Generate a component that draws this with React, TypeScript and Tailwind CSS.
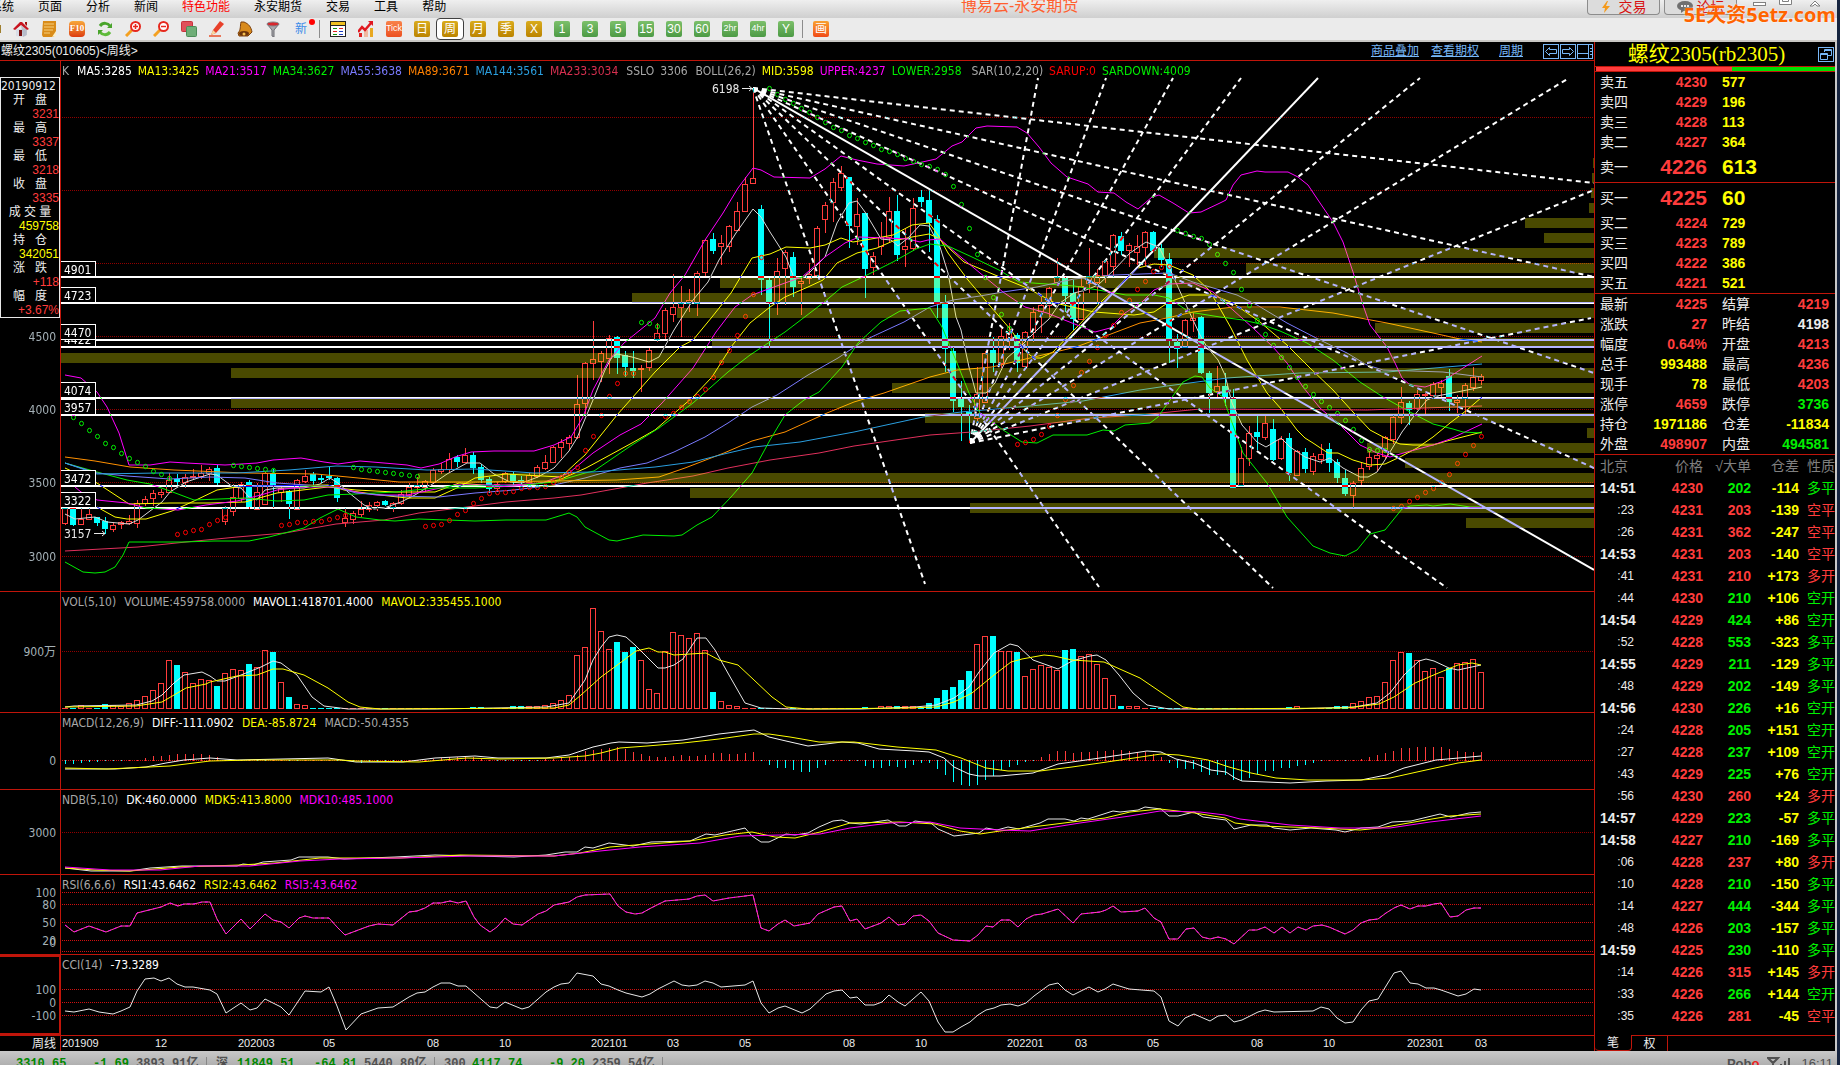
import type { ReactNode } from 'react';

const RED = '#c0150a';
const UP = '#ff3c3c';
const DOWN = '#00ffff';
const YELLOW = '#ffff00';
const MAGENTA = '#ff00ff';
const GREEN = '#00f000';

const STEP = 8;
const FIRST_X = 65;
const barX = (i: number) => FIRST_X + i * STEP;

// high, body top, body bottom, low ("c" = closed lower)
const candles = `508,508,523,525 508,508,525,526c 508,519,524,525 508,514,519,520 517,517,523,526c 517,521,529,534c
522,525,529,532 521,522,524,529 515,521,523,525 500,503,523,528 496,499,503,506 490,493,498,506 489,492,494,498
473,480,492,493 474,479,482,485c 474,477,482,488 469,476,477,480 465,473,476,479 467,469,473,481 465,468,483,485c
506,508,521,525 484,497,511,516 482,484,498,502 480,482,507,509c 483,492,509,509 472,473,504,505 469,473,485,508c
487,488,492,502 490,491,504,519c 479,480,509,510 470,476,481,483 472,474,481,485c 475,478,480,483c 467,476,478,480c
477,478,498,502c 508,518,522,527 511,513,519,524 501,509,514,517 502,505,509,512 501,502,505,511 500,501,505,506c
502,503,507,512 490,494,503,505 483,487,495,498 477,485,487,492 480,481,487,492 468,470,482,484 463,469,471,474
453,459,469,472 455,457,462,467c 448,455,462,463 452,455,468,474c 464,467,480,483c 477,479,489,493c 482,484,488,492
472,473,481,483 472,474,482,485c 476,480,482,487c 473,475,482,483 465,467,476,478 455,462,468,470 446,447,462,463
439,442,447,458 435,437,443,450 375,404,437,439 362,363,403,415 321,359,363,380 351,353,361,382 335,338,358,374
336,337,358,374c 351,355,367,377c 351,368,371,378c 365,368,369,392 348,350,367,371 323,333,339,342 308,310,333,339
274,307,314,322 286,303,307,337 289,300,303,312 271,273,303,316 239,240,272,276 233,239,251,254c 235,243,246,265
225,226,246,252 202,211,230,231 177,184,211,212 88,178,183,184 205,209,280,295c 278,280,303,348c 258,271,302,315
250,252,268,305 252,257,287,297c 278,281,283,315 263,274,278,284 226,228,275,277 202,205,219,233 178,182,202,222
166,173,187,191 177,177,226,248c 198,214,226,245 213,213,269,298c 252,256,267,275 222,237,246,255 197,211,237,243
195,211,255,261c 229,246,249,267 198,208,248,251 190,197,202,207c 190,200,223,252c 215,219,304,318c 295,303,349,372c
347,351,401,412c 381,399,407,441c 405,412,414,443c 367,394,418,423 351,353,402,403 337,350,363,372c 328,336,363,368
323,332,338,350 333,335,363,372c 331,332,366,368 307,312,332,342 295,305,311,333 287,288,305,317 258,277,282,284
277,278,296,312c 280,293,319,330c 278,286,319,320 248,276,283,293 269,275,282,304 260,261,275,283 234,235,266,277
232,236,251,255c 243,245,250,267 235,246,252,265 231,232,247,266 231,232,251,252c 244,248,260,267c 253,259,341,363c
334,342,349,368c 319,320,347,348 313,318,320,332 316,317,373,374c 371,373,393,413c 366,386,391,397 373,386,397,406c
389,398,488,488c 447,458,485,486 426,433,458,466 416,432,437,450c 416,423,437,440 419,429,460,461c 436,439,458,460
433,438,473,481c 450,451,475,476 448,452,469,473c 453,456,471,475 444,454,459,464 443,449,463,472c 459,462,478,483c
470,478,494,496c 481,483,495,508 462,468,480,485 451,457,466,470 453,455,458,471 436,437,456,459 415,417,439,444
387,402,417,424 401,403,410,425c 390,394,408,410 391,394,395,414 382,384,395,399 380,383,387,397 369,376,402,411c
395,400,402,413 383,385,398,414 367,377,387,391 374,376,380,385`
  .split(/\s+/)
  .map((s) => {
    const [high, top, bottom, low] = s.replace('c', '').split(',').map(Number);
    return { high, top, bottom, low, down: s.endsWith('c') };
  });

// bar heights of the volume pane
const volumes = [
  1, 1, 3, 1, 1, 5, 3, 2, 5, 8, 12, 18, 25, 48, 44, 36, 25, 29, 28, 23, 35, 39, 38, 45, 41, 58, 57, 26, 12, 4, 3, 1, 1, 1,
  1, 1, 1, 1, 1, 1, 1, 1, 1, 1, 1, 1, 1, 1, 1, 1, 1, 2, 2, 1, 1, 1, 3, 3, 2, 2, 3, 5, 8, 13, 53, 61, 100, 77, 59, 67, 57,
  62, 48, 19, 15, 57, 76, 73, 70, 75, 58, 17, 7, 3, 2, 1, 1, 1, 1, 1, 1, 1, 1, 1, 1, 1, 1, 1, 1, 1, 2, 1, 2, 2, 3, 2, 2, 1,
  6, 11, 19, 22, 29, 38, 64, 72, 73, 57, 57, 57, 32, 39, 43, 41, 38, 59, 60, 52, 54, 44, 30, 13, 3, 2, 2, 1, 1, 1, 1, 1, 1,
  1, 1, 1, 1, 1, 1, 1, 1, 1, 1, 1, 1, 2, 2, 1, 1, 1, 1, 3, 3, 5, 7, 11, 12, 26, 48, 56, 56, 48, 37, 40, 31, 41, 45, 46,
  49, 36,
];

const macdBars = [
  -4, -4, -3, -2, -2, -1, -1, -1, 1, 1, 3, 5, 5, 6, 7, 7, 7, 7, 6, 4, 1, 1, 1, 1, -1, -1, 1, 1, -1, -1, 1, 1, 1, 1, -1, -1,
  -2, -3, -2, -2, -1, -1, -1, 1, 1, 1, 2, 3, 4, 4, 4, 4, 2, 1, -1, -1, -1, -1, -1, -1, 2, 2, 3, 4, 6, 10, 11, 12, 13, 14,
  12, 9, 7, 5, 4, 4, 5, 6, 5, 5, 6, 8, 8, 7, 7, 8, 9, -1, -5, -8, -8, -10, -12, -12, -8, -5, -1, 1, -1, -1, -6, -8, -8, -6,
  -7, -8, -5, -3, -3, -9, -15, -22, -25, -26, -25, -20, -16, -10, -7, -5, -2, -1, 4, 7, 10, 10, 8, 9, 9, 10, 10, 11, 11,
  10, 9, 9, 7, 4, -3, -8, -9, -9, -12, -15, -15, -15, -20, -21, -18, -14, -11, -11, -8, -8, -6, -5, -3, -1, 1, 1, -1, 1, 2,
  4, 6, 8, 10, 13, 13, 14, 14, 14, 14, 12, 10, 9, 9, 9,
];

// [left edge, top] of the price distribution bars, all of them run to the right edge
const distribution = [
  [1593, 158], [1592, 173], [1591, 188], [1589, 203], [1525, 218], [1544, 233], [1154, 248], [1246, 263], [720, 278],
  [632, 293], [677, 308], [1375, 323], [712, 338], [61, 353], [231, 368], [892, 383], [231, 398], [925, 413],
  [1587, 428], [1367, 443], [1405, 458], [418, 473], [690, 488], [970, 503], [1466, 518],
];

const priceLines = [
  { color: '#d8d8d8', points: '65,514 75,519 95,517 107,522 129,524 138,520 162,502 170,492 186,482 210,474 217,475 233,487 241,488 249,497 257,500 265,490 277,488 304,488 320,484 330,478 338,483 348,492 364,505 374,509 384,508 401,502 415,495 431,485 447,474 467,463 480,463 494,474 510,482 522,483 538,477 554,468 569,451 577,438 593,400 605,370 612,357 617,354 632,357 649,362 659,357 674,330 693,300 708,282 719,260 736,233 753,209 761,217 770,232 786,257 794,278 802,278 810,272 825,257 837,223 849,203 857,201 865,212 881,239 891,240 898,246 908,238 920,225 929,226 940,247 948,273 956,317 961,330 969,367 976,393 986,393 995,383 1007,358 1022,345 1037,330 1049,319 1060,303 1074,293 1086,290 1098,285 1114,270 1130,253 1146,242 1159,247 1169,267 1187,307 1200,335 1207,347 1218,360 1225,375 1232,403 1242,425 1257,442 1266,447 1281,438 1290,447 1305,457 1320,462 1330,458 1343,468 1360,477 1368,477 1377,472 1385,460 1393,447 1402,432 1417,412 1427,400 1437,396 1457,392 1482,387' },
  { color: '#ffff00', points: '97,507 115,517 127,519 146,519 172,511 194,501 217,490 237,487 257,486 328,485 344,490 380,495 407,498 435,498 459,487 475,478 506,474 561,477 576,463 585,455 617,415 655,372 680,347 693,340 712,317 731,293 752,258 770,254 786,247 810,248 825,245 841,238 853,242 877,238 893,235 912,225 929,223 938,235 948,253 968,280 991,307 1011,330 1026,352 1034,358 1041,358 1053,352 1076,328 1103,300 1138,268 1154,264 1169,265 1193,275 1209,290 1218,305 1231,328 1247,360 1267,393 1282,410 1297,430 1305,438 1313,443 1328,453 1338,453 1353,460 1370,465 1385,464 1400,457 1417,448 1433,437 1450,423 1467,410 1482,397' },
  { color: '#ffff00', points: '65,468 97,483 129,504 170,503 210,503 245,502 277,493 328,487 356,490 395,492 435,492 459,483 494,486 534,484 559,480 586,468 632,443 655,430 693,397 712,377 731,347 750,323 770,307 785,297 808,287 823,280 837,263 857,253 877,248 893,241 912,237 929,234 938,238 964,262 995,275 1027,288 1055,303 1094,312 1134,315 1154,312 1169,302 1189,295 1213,295 1233,303 1260,322 1287,345 1310,368 1333,390 1353,412 1370,430 1385,438 1400,444 1413,445 1433,445 1447,441 1482,432' },
  { color: '#ff00ff', points: '75,487 81,492 97,500 127,503 146,508 178,510 206,505 237,501 261,495 277,490 301,487 336,487 356,492 376,495 407,495 431,490 455,485 514,485 542,483 569,473 593,453 620,435 641,424 662,403 693,368 716,332 735,307 752,295 785,283 802,277 825,257 845,243 859,237 885,238 908,239 920,242 928,240 940,239 956,253 980,273 1003,292 1025,307 1047,313 1072,323 1095,332 1110,328 1125,313 1142,302 1154,290 1169,284 1193,283 1213,292 1233,310 1253,328 1273,347 1287,363 1303,387 1320,408 1340,425 1360,445 1377,453 1390,457 1407,452 1433,445 1450,439 1482,424' },
  { color: '#00f000', points: '65,463 97,472 127,480 150,484 170,491 194,500 245,498 277,501 304,500 328,495 356,494 395,492 435,488 475,488 514,486 554,482 585,473 594,471 632,445 659,428 693,403 728,372 750,355 785,332 823,303 842,287 861,278 893,262 916,249 930,244 948,246 972,257 999,270 1019,282 1047,284 1074,286 1098,290 1126,295 1154,295 1169,298 1189,312 1220,317 1243,320 1260,324 1280,331 1307,343 1333,360 1360,382 1383,397 1410,412 1433,424 1453,429 1463,432 1482,433' },
  { color: '#7a7aff', points: '65,463 97,473 127,476 170,479 210,477 245,478 277,483 336,487 356,493 395,496 439,497 475,493 514,490 554,485 585,478 620,468 647,463 674,452 705,437 728,423 752,407 777,395 808,375 838,358 865,340 904,322 930,307 953,300 980,296 1003,292 1037,287 1074,279 1114,275 1169,273 1193,282 1237,295 1257,305 1287,323 1320,340 1347,353 1367,365 1383,370 1443,372 1482,377' },
  { color: '#ff9000', points: '65,457 95,461 130,467 174,470 245,473 316,474 348,477 399,482 475,482 554,481 617,480 659,477 685,468 724,453 752,441 785,432 827,413 854,402 884,393 930,377 957,370 992,367 1030,358 1076,347 1103,337 1140,323 1167,318 1193,312 1233,307 1280,307 1333,313 1387,323 1433,333 1460,339 1482,342' },
  { color: '#2a9fe0', points: '65,463 97,474 158,473 237,473 289,470 336,466 376,467 427,470 475,469 534,473 594,472 655,467 693,462 724,454 754,447 800,442 854,432 923,417 961,412 1030,406 1083,401 1140,390 1167,386 1227,378 1300,373 1387,372 1482,364' },
  { color: '#e0305c', points: '65,551 138,547 186,542 237,537 285,533 336,524 384,520 419,513 467,507 506,502 554,498 581,495 620,488 647,483 693,476 728,468 770,460 819,453 854,446 930,435 972,432 1030,426 1091,418 1140,415 1200,409 1367,410 1482,406' },
  { color: '#ff00ff', points: '65,375 81,378 97,392 107,407 119,433 129,465 150,465 170,462 186,463 225,465 257,463 273,460 301,458 324,462 338,464 360,461 384,463 407,465 421,468 439,464 455,457 471,452 494,451 534,451 554,445 571,437 583,417 593,390 609,360 624,343 655,318 670,293 685,275 705,240 723,213 738,188 753,168 761,170 774,177 810,178 825,169 841,156 857,160 877,164 904,166 936,159 952,146 962,142 976,128 987,126 1017,127 1027,133 1039,147 1051,163 1067,177 1088,184 1098,192 1114,193 1126,202 1138,209 1152,197 1159,195 1173,203 1189,213 1201,212 1220,203 1226,200 1233,185 1241,175 1257,171 1265,172 1288,172 1298,177 1308,185 1318,200 1333,222 1343,242 1353,272 1363,305 1370,325 1387,347 1395,363 1402,378 1410,385 1425,387 1443,381 1460,370 1482,356' },
  { color: '#00f000', points: '65,562 83,572 95,573 105,572 115,567 123,555 129,542 182,542 214,541 249,541 269,537 304,528 320,518 338,509 356,517 380,520 395,521 419,519 475,521 506,520 546,520 569,513 577,517 585,527 609,540 617,541 643,535 674,536 682,535 697,525 712,517 731,497 752,473 770,440 785,415 804,400 819,392 842,367 858,343 881,322 900,311 930,308 942,327 957,363 969,393 980,413 1003,430 1022,442 1037,443 1053,435 1087,435 1103,430 1114,431 1125,425 1150,423 1158,417 1170,400 1183,382 1195,376 1202,377 1210,388 1223,397 1230,417 1243,453 1267,483 1287,517 1313,546 1330,553 1345,556 1357,550 1370,534 1385,530 1402,509 1410,506 1427,505 1433,506 1450,504 1470,507 1482,507' },
];

// parabolic stop-and-reverse dots: starting bar, colour, heights
const sar = [
  { from: 1, color: GREEN, ys: [417, 423, 430, 436, 443, 447, 453, 458, 462, 466, 471, 474, 478] },
  { from: 14, color: 'red', ys: [534, 532, 530, 529, 524, 520, 517] },
  { from: 21, color: GREEN, ys: [465, 466, 467, 468, 469, 470] },
  { from: 27, color: 'red', ys: [525, 524, 522, 522, 521, 521, 519, 517, 515] },
  { from: 36, color: GREEN, ys: [467, 469, 470, 471, 472, 473, 474, 475, 476] },
  { from: 45, color: 'red', ys: [526, 525, 524, 520, 514, 510, 503, 498, 493, 492, 492, 491, 488, 487, 487, 486, 482, 477, 472, 467, 450, 436, 415, 396, 383, 373, 373] },
  { from: 72, color: GREEN, ys: [322, 323, 326] },
  { from: 75, color: 'red', ys: [416, 413, 407, 401, 396, 389, 377, 362, 350, 335, 316, 294, 257] },
  { from: 88, color: GREEN, ys: [88, 94, 99, 103, 108, 112, 117, 122, 127, 130, 135, 138, 142, 145, 149, 151, 154, 158, 161, 164, 166, 169, 174, 186, 204, 228, 254, 277, 297, 314, 328] },
  { from: 119, color: 'red', ys: [444, 442, 439, 434, 426, 415, 399, 385, 372, 361, 347, 335, 325, 312, 300, 289, 281, 271, 267, 266] },
  { from: 139, color: GREEN, ys: [230, 233, 236, 238, 244, 254, 263, 272, 289, 305, 320, 334, 345, 357, 367, 377, 386, 394, 401, 407, 413, 420, 429, 440, 449, 450, 450] },
  { from: 166, color: 'red', ys: [508, 506, 501, 497, 492, 488, 482, 474, 463, 454, 445, 436] },
];

const levels = [
  { value: 4901, y: 277 }, { value: 4723, y: 303 }, { value: 4422, y: 347 }, { value: 4470, y: 340 },
  { value: 4074, y: 398 }, { value: 3957, y: 415 }, { value: 3472, y: 486 }, { value: 3322, y: 508 },
];

const fanDown = [[925, 584], [1099, 587], [1273, 588], [1447, 588], [1594, 468], [1594, 373], [1594, 277], [1594, 183]];
const fanUp = [[1038, 78], [1106, 78], [1173, 78], [1241, 78], [1420, 78], [1569, 78], [1594, 190], [1591, 318]];

const mavol1 = '65,707 74,706 136,705 152,701 162,695 174,683 184,675 202,672 210,676 217,681 225,681 241,675 261,667 273,661 281,663 297,675 312,697 324,706 348,709 435,709 494,708 546,707 569,703 585,680 593,660 601,647 609,637 617,635 626,637 635,645 647,657 658,668 665,668 674,665 683,659 697,638 706,638 715,650 729,675 745,703 761,708 790,709 861,709 915,707 936,705 954,698 969,687 979,672 994,653 1010,644 1018,646 1033,660 1047,665 1058,669 1072,661 1090,656 1097,655 1106,660 1119,675 1133,693 1147,705 1169,709 1290,709 1354,707 1377,703 1390,693 1404,675 1419,661 1426,659 1434,661 1449,668 1458,670 1481,665';
const mavol2 = '65,707 136,706 162,702 186,688 206,684 210,682 237,676 257,675 273,669 283,669 304,675 328,688 348,702 360,707 380,709 554,708 569,705 581,695 601,677 620,663 636,651 649,648 658,652 665,652 674,655 706,653 719,660 738,665 754,680 772,697 786,707 808,709 908,708 936,707 954,702 972,693 994,675 1011,662 1022,659 1044,655 1054,656 1072,660 1104,662 1140,678 1165,695 1183,707 1197,709 1347,708 1379,704 1394,697 1415,683 1436,674 1458,665 1472,663 1481,665';
const diff = '65,769 115,769 146,767 166,763 184,760 210,758 237,760 328,758 356,762 403,762 435,758 475,756 498,758 546,758 569,755 593,747 611,743 619,742 647,743 683,740 719,734 754,730 769,737 786,741 808,746 826,744 842,742 858,743 879,749 915,751 929,752 944,758 954,767 969,774 979,776 1000,776 1033,773 1058,764 1100,758 1147,751 1161,752 1176,759 1194,763 1211,770 1226,772 1235,778 1242,781 1290,783 1326,781 1361,780 1386,775 1404,768 1436,760 1481,756';
const dea = '65,768 107,769 170,766 210,761 253,760 340,760 356,761 419,762 467,758 500,759 554,758 585,756 601,753 620,748 647,746 683,743 719,739 754,734 769,734 790,737 819,742 854,742 897,747 936,750 961,758 986,768 1008,771 1040,771 1072,767 1100,763 1161,754 1179,755 1208,760 1229,767 1251,773 1276,778 1308,780 1361,780 1390,778 1426,770 1458,763 1481,760';
const dk = '65,868 91,871 130,871 150,868 182,866 237,866 243,864 253,865 263,862 291,860 299,857 328,857 344,859 395,857 435,855 475,856 514,857 546,855 565,852 577,852 585,847 593,848 609,843 633,846 651,842 690,841 706,834 715,835 745,828 752,836 761,842 769,842 786,834 795,835 808,833 819,827 833,821 842,820 850,823 861,824 888,820 899,826 906,826 915,821 931,823 938,829 954,836 979,833 986,828 997,830 1008,827 1019,829 1040,823 1048,819 1065,819 1074,821 1081,818 1088,819 1113,811 1120,812 1138,810 1145,807 1161,809 1169,816 1178,816 1194,812 1203,817 1226,820 1234,829 1251,825 1267,825 1274,828 1290,830 1311,828 1336,830 1345,832 1361,828 1378,827 1392,822 1411,821 1440,814 1451,817 1469,813 1481,812';
const mdk5 = '65,868 95,870 130,871 180,867 240,865 275,863 320,858 400,858 460,855 554,856 580,853 610,847 635,845 690,841 725,835 752,832 775,837 795,838 820,832 850,823 900,822 935,824 960,831 980,834 1000,831 1040,826 1080,821 1105,818 1130,812 1160,809 1195,813 1225,818 1235,823 1260,826 1320,828 1360,830 1380,828 1420,821 1450,816 1481,814';
const mdk10 = '65,867 110,870 160,870 200,866 250,866 300,861 340,859 400,858 470,856 554,856 600,851 640,847 700,843 740,836 820,834 850,828 890,823 930,822 960,828 1000,830 1030,831 1080,823 1130,816 1160,811 1200,812 1225,815 1240,819 1290,825 1340,828 1390,828 1430,822 1481,816';
const rsi = '65,925 74,932 89,926 106,932 121,926 130,926 137,913 161,907 170,903 178,906 184,904 194,904 202,902 210,902 217,919 226,934 241,919 250,929 265,914 273,920 281,922 289,928 299,918 305,916 313,918 329,918 337,927 345,935 369,926 378,924 393,925 409,912 417,911 425,908 433,903 441,903 450,901 458,903 466,901 474,917 480,925 490,932 497,927 505,918 513,924 522,925 538,914 546,911 554,905 569,902 577,897 585,895 610,894 618,906 626,912 635,914 642,913 651,908 665,901 689,899 697,896 705,895 713,901 729,898 753,895 761,928 769,931 778,924 785,920 794,926 810,923 818,914 834,907 842,906 850,921 857,919 865,929 881,923 889,917 898,925 905,924 913,916 921,915 929,921 938,933 953,940 970,941 978,935 986,926 993,927 1001,920 1010,920 1018,927 1026,919 1034,915 1042,914 1058,909 1073,923 1081,914 1100,912 1106,910 1113,906 1121,912 1138,911 1145,908 1154,918 1161,922 1169,939 1178,939 1186,929 1194,928 1202,937 1210,939 1218,937 1226,939 1234,944 1249,930 1257,930 1265,927 1274,933 1282,927 1290,933 1298,927 1306,930 1313,926 1322,925 1329,927 1345,934 1353,930 1361,923 1369,920 1378,919 1386,913 1394,908 1401,905 1410,909 1418,906 1426,906 1434,904 1441,903 1450,917 1458,916 1466,910 1474,908 1481,908';
const cci = '65,1011 74,1012 89,1009 99,1012 113,1014 121,1011 130,1007 137,991 145,979 154,978 161,981 169,978 177,984 185,987 193,987 210,990 217,994 226,1013 241,1003 250,1010 257,1008 265,999 281,1007 289,1015 297,1003 305,991 321,992 329,987 337,1006 346,1030 361,1014 378,1008 393,1007 409,997 417,993 425,992 433,987 441,983 450,983 458,986 466,986 474,993 490,1007 497,1008 505,1002 522,1009 529,1007 546,992 554,987 561,984 569,983 577,973 593,976 601,984 609,986 618,990 626,993 642,997 650,994 658,989 674,981 682,985 689,986 697,985 705,981 713,983 721,987 745,985 753,981 761,1003 769,1013 778,1008 785,1006 802,1013 810,1009 826,994 834,991 842,990 850,998 857,997 865,1005 874,1005 882,1002 889,995 898,1002 905,1006 913,999 921,992 929,1001 938,1022 945,1032 953,1032 961,1027 970,1022 978,1015 986,1010 994,1008 1001,1005 1010,1004 1018,1006 1026,1003 1034,996 1049,985 1058,983 1065,990 1073,995 1089,987 1098,992 1105,989 1113,984 1129,989 1154,991 1161,997 1169,1021 1178,1026 1185,1018 1194,1014 1210,1021 1218,1016 1226,1015 1234,1022 1242,1020 1258,1012 1265,1010 1274,1012 1313,1011 1321,1007 1329,1009 1337,1018 1345,1023 1353,1022 1361,1010 1369,1001 1378,999 1394,973 1401,971 1410,983 1418,984 1426,988 1434,988 1441,990 1458,996 1466,994 1474,989 1481,990';

const dates: [string, number][] = [
  ['201909', 62], ['12', 155], ['202003', 238], ['05', 323], ['08', 427], ['10', 499], ['202101', 591], ['03', 667],
  ['05', 739], ['08', 843], ['10', 915], ['202201', 1007], ['03', 1075], ['05', 1147], ['08', 1251], ['10', 1323],
  ['202301', 1407], ['03', 1475],
];

type Item = [text: string, className: string];

const priceLegend: Item[] = [
  ['K', 'text-[#a8a8a8] pr-0.5'],
  ['MA5:3285', 'text-white'],
  ['MA13:3425', 'text-[#ffff00]'],
  ['MA21:3517', 'text-[#ff00ff]'],
  ['MA34:3627', 'text-[#00f000]'],
  ['MA55:3638', 'text-[#7a7aff]'],
  ['MA89:3671', 'text-[#ff8000]'],
  ['MA144:3561', 'text-[#2a9fe0]'],
  ['MA233:3034', 'text-[#d83050] pr-0.5'],
  ['SSLO', 'text-[#a8a8a8]'],
  ['3306', 'text-[#a8a8a8] pr-0.5'],
  ['BOLL(26,2)', 'text-[#a8a8a8]'],
  ['MID:3598', 'text-[#ffff00]'],
  ['UPPER:4237', 'text-[#ff00ff]'],
  ['LOWER:2958', 'text-[#00f000] pr-1'],
  ['SAR(10,2,20)', 'text-[#a8a8a8]'],
  ['SARUP:0', 'text-[#ff0000]'],
  ['SARDOWN:4009', 'text-[#00f000]'],
];

const menus: Item[] = [
  ['系统', ''], ['页面', ''], ['分析', ''], ['新闻', ''], ['特色功能', 'text-[#ff0000]'], ['永安期货', ''], ['交易', ''],
  ['工具', ''], ['帮助', ''],
];

const hoverInfo = [
  ['开   盘', '3231', 'text-[#ff3c3c]'],
  ['最   高', '3337', 'text-[#ff3c3c]'],
  ['最   低', '3218', 'text-[#ff3c3c]'],
  ['收   盘', '3335', 'text-[#ff3c3c]'],
  ['成 交 量', '459758', 'text-[#ffff00]'],
  ['持   仓', '342051', 'text-[#ffff00]'],
  ['涨   跌', '+118', 'text-[#ff3c3c]'],
  ['幅   度', '+3.67%', 'text-[#ff3c3c]'],
];

const asks = [['卖五', 4230, 577], ['卖四', 4229, 196], ['卖三', 4228, 113], ['卖二', 4227, 364], ['卖一', 4226, 613]] as const;
const bids = [['买一', 4225, 60], ['买二', 4224, 729], ['买三', 4223, 789], ['买四', 4222, 386], ['买五', 4221, 521]] as const;

const R = 'text-[#ff3c3c]';
const G = 'text-[#00f000]';
const Y = 'text-[#ffff00]';
const W = 'text-[#ececec]';

const stats = [
  ['最新', '4225', R, '结算', '4219', R],
  ['涨跌', '27', R, '昨结', '4198', W],
  ['幅度', '0.64%', R, '开盘', '4213', R],
  ['总手', '993488', Y, '最高', '4236', R],
  ['现手', '78', Y, '最低', '4203', R],
  ['涨停', '4659', R, '跌停', '3736', G],
  ['持仓', '1971186', Y, '仓差', '-11834', Y],
  ['外盘', '498907', R, '内盘', '494581', G],
];

const ticks = [
  ['14:51', 4230, 202, '-114', '多平', G], [':23', 4231, 203, '-139', '空平', R], [':26', 4231, 362, '-247', '空平', R],
  ['14:53', 4231, 203, '-140', '空平', R], [':41', 4231, 210, '+173', '多开', R], [':44', 4230, 210, '+106', '空开', G],
  ['14:54', 4229, 424, '+86', '空开', G], [':52', 4228, 553, '-323', '多平', G], ['14:55', 4229, 211, '-129', '多平', G],
  [':48', 4229, 202, '-149', '多平', G], ['14:56', 4230, 226, '+16', '空开', G], [':24', 4228, 205, '+151', '空开', G],
  [':27', 4228, 237, '+109', '空开', G], [':43', 4229, 225, '+76', '空开', G], [':56', 4230, 260, '+24', '多开', R],
  ['14:57', 4229, 223, '-57', '多平', G], ['14:58', 4227, 210, '-169', '多平', G], [':06', 4228, 237, '+80', '多开', R],
  [':10', 4228, 210, '-150', '多平', G], [':14', 4227, 444, '-344', '多平', G], [':48', 4226, 203, '-157', '多平', G],
  ['14:59', 4225, 230, '-110', '多平', G], [':14', 4226, 315, '+145', '多开', R], [':33', 4226, 266, '+144', '空开', G],
  [':35', 4226, 281, '-45', '空平', R],
] as const;

const TAHOMA = "font-['DejaVu_Sans_Condensed','Noto_Sans_CJK_SC',sans-serif]";
const SONG = "font-['Liberation_Sans','Noto_Sans_CJK_SC',sans-serif]";

function Line({ points, color, dash }: { points: string; color: string; dash?: string }) {
  return <polyline points={points} fill="none" stroke={color} strokeWidth="1" strokeDasharray={dash} />;
}

function Grid({ ys, bright }: { ys: number[]; bright?: boolean }) {
  return (
    <>
      {ys.map((y) => (
        <line key={y} x1="62" x2="1594" y1={y + 0.5} y2={y + 0.5} stroke={bright ? '#d01010' : '#900000'} strokeDasharray="1 1" />
      ))}
    </>
  );
}

function AxisLabels({ items }: { items: [string, number][] }) {
  return (
    <g fill="#a4b0b6" fontSize="12" textAnchor="end">
      {items.map(([text, y]) => (
        <text key={text} x="56" y={y + 5}>{text}</text>
      ))}
    </g>
  );
}

function Legend({ items }: { items: Item[] }) {
  return (
    <div className={`absolute top-0 left-[62px] flex h-5 items-center text-xs whitespace-pre ${items.length > 4 ? 'gap-1.5' : 'gap-2'}`}>
      {items.map(([text, className]) => (
        <span key={text} className={className}>{text}</span>
      ))}
    </div>
  );
}

type PaneProps = { top: number; height: number; className: string; legend: Item[]; label: string; children: ReactNode };

function Pane({ top, height, className, legend, label, children }: PaneProps) {
  return (
    <section aria-label={label} className={`relative border-b border-[#c0150a] ${className}`}>
      <svg className="h-full w-full" viewBox={`0 ${top} 1594 ${height}`} preserveAspectRatio="xMinYMin slice">
        {children}
        <line x1="60.5" x2="60.5" y1={top} y2={top + height} stroke={RED} />
      </svg>
      <Legend items={legend} />
    </section>
  );
}

function PriceChart() {
  return (
    <Pane top={61} height={530} className="h-[531px] isolate" label="K线" legend={priceLegend}>
      <Grid ys={[117, 190, 263, 336, 409, 482, 556]} />
      <AxisLabels items={[['4500', 336], ['4000', 409], ['3500', 482], ['3000', 556]]} />
      <g shapeRendering="crispEdges">
        {candles.map((c, i) => {
          const x = barX(i);
          const h = Math.max(c.bottom - c.top, 1);
          return c.down ? (
            <g key={i} fill={DOWN}>
              <rect x={x} y={c.high} width="1" height={c.low - c.high} />
              <rect x={x - 3} y={c.top} width="6" height={h} />
            </g>
          ) : (
            <g key={i} stroke={UP} fill="none">
              <path d={`M${x + 0.5} ${c.high}V${c.top}M${x + 0.5} ${c.bottom}V${c.low}`} />
              <rect x={x - 2.5} y={c.top + 0.5} width="5" height={h} />
            </g>
          );
        })}
      </g>
      {priceLines.map((l, i) => (
        <Line key={i} {...l} />
      ))}
      {sar.map((s) =>
        s.ys.map((y, i) => (
          <ellipse key={s.from + i} cx={barX(s.from + i) + 0.5} cy={y + 0.5} rx="2" ry="2.2" fill="none" stroke={s.color} />
        )),
      )}
      <g fill="#ffff00" fillOpacity="0.29">
        {distribution.map(([x, y]) => (
          <rect key={y} x={x} y={y} width={1594 - x} height="10" />
        ))}
      </g>
      {/* drawing tools invert what lies under them */}
      <g stroke="#fff" strokeWidth="2" className="mix-blend-difference">
        {levels.map((l) => (
          <line key={l.value} x1="60" x2="1594" y1={l.y} y2={l.y} />
        ))}
        <line x1="753" y1="88" x2="1594" y2="570" />
        <line x1="970" y1="443" x2="1318" y2="78" />
        <g strokeDasharray="5 4">
          {fanDown.map(([x, y]) => (
            <line key={`${x}-${y}`} x1="753" y1="88" x2={x} y2={y} />
          ))}
          {fanUp.map(([x, y]) => (
            <line key={`${x}-${y}`} x1="970" y1="443" x2={x} y2={y} />
          ))}
        </g>
      </g>
      {levels.map((l) => (
        <g key={l.value} fontSize="12">
          <rect x="60.5" y={l.y - 15.5} width="35" height="15" fill="#000" stroke="#fff" />
          <text x="64" y={l.y - 3} fill="#fff">{l.value}</text>
        </g>
      ))}
      <g fontSize="12" fill="#e8e8e8">
        <text x="712" y="93">6198</text>
        <text x="64" y="538">3157</text>
        <path d="M742 88.500h10M749 86l3 2.500-3 2.500M94 533.500h11M102 531l3 2.500-3 2.500" fill="none" stroke="#e8e8e8" />
      </g>
    </Pane>
  );
}

function VolumeChart() {
  return (
    <Pane
      top={592} height={120} className="h-[121px]" label="成交量"
      legend={[
        ['VOL(5,10)', 'text-[#a8a8a8]'],
        ['VOLUME:459758.0000', 'text-[#a8a8a8]'],
        ['MAVOL1:418701.4000', 'text-white'],
        ['MAVOL2:335455.1000', 'text-[#ffff00]'],
      ]}
    >
      <Grid ys={[651]} />
      <AxisLabels items={[['900万', 651]]} />
      <g shapeRendering="crispEdges">
        {volumes.map((v, i) =>
          candles[i].down || v < 2 ? (
            <rect key={i} x={barX(i) - 3} y={709 - v} width="6" height={v} fill={candles[i].down ? DOWN : UP} />
          ) : (
            <rect key={i} x={barX(i) - 2.5} y={708.5 - v} width="5" height={v} fill="none" stroke={UP} />
          ),
        )}
      </g>
      <Line points={mavol1} color="#e8e8e8" />
      <Line points={mavol2} color={YELLOW} />
    </Pane>
  );
}

function MacdChart() {
  return (
    <Pane
      top={713} height={76} className="h-[77px]" label="MACD"
      legend={[
        ['MACD(12,26,9)', 'text-[#a8a8a8]'],
        ['DIFF:-111.0902', 'text-white'],
        ['DEA:-85.8724', 'text-[#ffff00]'],
        ['MACD:-50.4355', 'text-[#a8a8a8]'],
      ]}
    >
      <Grid ys={[760]} bright />
      <AxisLabels items={[['0', 760]]} />
      <g shapeRendering="crispEdges">
        {macdBars.map((v, i) => (
          <rect key={i} x={barX(i)} y={v > 0 ? 761 - v : 760} width="1" height={Math.abs(v)} fill={v > 0 ? UP : DOWN} />
        ))}
      </g>
      <Line points={diff} color="#f4f4f4" />
      <Line points={dea} color={YELLOW} />
    </Pane>
  );
}

function NdbChart() {
  return (
    <Pane
      top={790} height={84} className="h-[85px]" label="NDB"
      legend={[
        ['NDB(5,10)', 'text-[#a8a8a8]'],
        ['DK:460.0000', 'text-white'],
        ['MDK5:413.8000', 'text-[#ffff00]'],
        ['MDK10:485.1000', 'text-[#ff00ff]'],
      ]}
    >
      <Grid ys={[832]} />
      <AxisLabels items={[['3000', 832]]} />
      <Line points={dk} color="#e8e8e8" />
      <Line points={mdk5} color={YELLOW} />
      <Line points={mdk10} color={MAGENTA} />
    </Pane>
  );
}

function RsiChart() {
  return (
    <Pane
      top={875} height={79} className="h-[80px]" label="RSI"
      legend={[
        ['RSI(6,6,6)', 'text-[#a8a8a8]'],
        ['RSI1:43.6462', 'text-white'],
        ['RSI2:43.6462', 'text-[#ffff00]'],
        ['RSI3:43.6462', 'text-[#ff00ff]'],
      ]}
    >
      <Grid ys={[892, 904, 922, 940, 951]} bright />
      <AxisLabels items={[['100', 892], ['80', 904], ['50', 922], ['20', 940], ['0', 942]]} />
      <Line points={rsi} color="#ff5a9c" />
      <Line points={rsi} color={MAGENTA} dash="3 3" />
    </Pane>
  );
}

function CciChart() {
  return (
    <Pane
      top={955} height={80} className="h-[81px]" label="CCI"
      legend={[
        ['CCI(14)', 'text-[#a8a8a8]'],
        ['-73.3289', 'text-white'],
      ]}
    >
      <rect x="-2" y="956" width="62" height="78" fill="none" stroke={RED} strokeWidth="2" />
      <Grid ys={[989, 1002, 1015]} bright />
      <AxisLabels items={[['100', 989], ['0', 1002], ['-100', 1015]]} />
      <Line points={cci} color="#e8e8e8" />
    </Pane>
  );
}

function HoverInfo() {
  return (
    <aside className="absolute top-[35px] left-0 w-[60px] border border-[#e8e8e8] bg-black text-xs leading-[14px] text-[#ececec]">
      <div className="pt-px">20190912</div>
      {hoverInfo.map(([label, value, color]) => (
        <div key={label} className={SONG}>
          <div className="text-center whitespace-pre">{label}</div>
          <div className={`text-right ${color}`}>{value}</div>
        </div>
      ))}
    </aside>
  );
}

const svgIcon = 'h-4 w-4';

const leadingIcons: [string, ReactNode][] = [
  ['首页', <svg key="i" className={svgIcon} viewBox="0 0 16 16"><path d="M3 8h10v7l-5 1-5-1z" fill="#d9dde6" /><path d="M0 8 7 1l2 0 7 7-2 1-6-5-6 5z" fill="#c81420" /><path d="M8 4l6 5v5l-4 2z" fill="#9ea6b8" opacity=".6" /><path d="M6 9h3v6H6z" fill="#7a1010" /><path d="M12 1h2v4l-2-2z" fill="#a01010" /></svg>],
  ['公告', <svg key="i" className={svgIcon} viewBox="0 0 16 16"><path d="M2 0h13v14l-3 2H2l-1-2z" fill="#d98c1a" /><path d="M3 3h10M3 6h10M3 9h9M3 12h6" stroke="#f6cf7c" /><path d="M15 10v5l-4 1z" fill="#fbeec8" /></svg>],
  ['F10', <span key="i" className="flex h-4 w-4 items-center justify-center rounded-sm bg-gradient-to-b from-[#f7a63a] to-[#dc3a10] font-['Liberation_Serif',serif] text-[9px] font-bold text-white">F10</span>],
  ['刷新', <svg key="i" className={svgIcon} viewBox="0 0 16 16" fill="none" strokeWidth="3"><path d="M3 5c3-4 8-3 10 0" stroke="#4aa52c" /><path d="M13 11c-3 4-8 3-10 0" stroke="#5fbb3a" /><path d="M15 2v5h-5zM1 14V9h5z" fill="#4aa52c" /></svg>],
  ['放大', <svg key="i" className={svgIcon} viewBox="0 0 16 16"><path d="m7 9-6 6" stroke="#f4a020" strokeWidth="3" /><circle cx="10.500" cy="5.500" r="4.500" fill="#fff" stroke="#e6281e" strokeWidth="2" /><path d="M8 5.500h5M10.500 3v5" stroke="#e6281e" strokeWidth="1.500" /></svg>],
  ['缩小', <svg key="i" className={svgIcon} viewBox="0 0 16 16"><path d="m7 9-6 6" stroke="#f4a020" strokeWidth="3" /><circle cx="10.500" cy="5.500" r="4.500" fill="#fff" stroke="#e6281e" strokeWidth="2" /><path d="M8 5.500h5" stroke="#e6281e" strokeWidth="1.500" /></svg>],
  ['叠加', <svg key="i" className={svgIcon} viewBox="0 0 16 16"><rect x=".5" y=".5" width="11" height="10" rx="1" fill="#e0505a" stroke="#c8323c" /><rect x="5.500" y="5.500" width="10" height="10" rx="1" fill="#6fae78" stroke="#4c8c58" /></svg>],
  ['画线', <svg key="i" className={svgIcon} viewBox="0 0 16 16"><path d="M11 0l4 3-8 9-5 2 2-5z" fill="#e8402a" /><path d="M4 9l3 3-5 2z" fill="#f6d9a0" /><path d="M0 15h12" stroke="#e8502a" strokeWidth="1.500" /></svg>],
  ['预警', <svg key="i" className={svgIcon} viewBox="0 0 16 16"><path d="M4 1l3 0c5 2 7 5 8 10l-4 4H2l-1-3c3-3 2-7 3-11z" fill="#d88a1c" stroke="#7a3f0c" /><ellipse cx="7" cy="12.500" rx="5" ry="2.500" fill="#6b330c" /><circle cx="7" cy="13" r="1.500" fill="#f4c050" /></svg>],
  ['筛选', <svg key="i" className={svgIcon} viewBox="0 0 16 16"><path d="M2 3l5 6v6l2 1V9l5-6z" fill="#a8a8ac" stroke="#6e6e74" /><ellipse cx="8" cy="3" rx="6" ry="2" fill="#d8262c" stroke="#84848a" /></svg>],
];

const gold = 'bg-gradient-to-b from-[#d9ab1c] to-[#bb8400]';
const green = 'bg-gradient-to-b from-[#7cc06a] to-[#4c9a45]';
const periods: Item[] = [
  ['Tick', 'bg-gradient-to-b from-[#f8824a] to-[#ec5020] text-[9px]'],
  ['日', `${gold} text-xs`], ['周', `${gold} text-xs`], ['月', `${gold} text-xs`], ['季', `${gold} text-xs`], ['X', `${gold} text-xs`],
  ['1', `${green} text-xs`], ['3', `${green} text-xs`], ['5', `${green} text-xs`], ['15', `${green} text-xs`],
  ['30', `${green} text-xs`], ['60', `${green} text-xs`], ['2hr', `${green} text-[9px]`], ['4hr', `${green} text-[9px]`],
  ['Y', `${green} text-xs`],
];

function Toolbar() {
  return (
    <div className="flex h-[24px] items-center border-b-2 border-[#c9c7c4] bg-[#ebebeb]">
      <i className="mr-1.5 h-2 w-px bg-[#a08030]" />
      {leadingIcons.map(([name, icon]) => (
        <button key={name} aria-label={name} className="flex h-5 w-7 items-center justify-center">{icon}</button>
      ))}
      <button className="relative flex h-5 w-7 items-center justify-center text-xs text-[#3c8ce8]">
        新
        <i className="absolute top-0 right-0 h-1.5 w-1.5 rounded-full bg-[#ff0000]" />
      </button>
      <i className="mx-1 h-[18px] w-px bg-[#8c8c8c]" />
      <button aria-label="报价" className="flex h-5 w-7 items-center justify-center">
        <svg className={svgIcon} viewBox="0 0 16 16"><rect x=".5" y=".5" width="15" height="15" fill="#fff" stroke="#222" /><path d="M1 1h14v3H1z" fill="#f0c020" /><path d="M1 4.500h14" stroke="#222" /><path d="M3 7.500h4M3 13.500h4" stroke="#109010" /><path d="M3 10.500h4M9 7.500h4" stroke="#e02020" /><path d="M9 10.500h4M9 13.500h4" stroke="#2040c0" /></svg>
      </button>
      <button aria-label="走势" className="flex h-5 w-7 items-center justify-center">
        <svg className={svgIcon} viewBox="0 0 16 16"><path d="M1 12h3v4H1z" fill="#e02020" /><path d="M6 9h4v7H6z" fill="#f0b8a0" /><path d="M12 7h3v9h-3z" fill="#e8a820" /><path d="M0 11l4-5 3 3 6-7" fill="none" stroke="#e01820" strokeWidth="2.500" /><path d="M10 0h5v5z" fill="#e01820" /></svg>
      </button>
      {periods.map(([text, className]) => (
        <button key={text} className={text === '周' ? 'flex h-[22px] w-7 items-center justify-center rounded-sm border border-[#404040] bg-white' : 'flex h-5 w-7 items-center justify-center'}>
          <span className={`flex h-4 w-4 items-center justify-center rounded-xs text-white ${className}`}>{text}</span>
        </button>
      ))}
      <i className="ml-0.5 h-[18px] w-px bg-[#8c8c8c]" />
      <button className="flex h-5 w-9 items-center justify-center">
        <span className="flex h-4 w-4 items-center justify-center rounded-xs bg-gradient-to-b from-[#f8a030] to-[#f04818] text-xs text-white">画</span>
      </button>
    </div>
  );
}

function TitleBar() {
  return (
    <header className="relative flex h-[18px] justify-between overflow-hidden bg-gradient-to-b from-[#efefef] to-[#cfcfcf]">
      <nav className="-ml-2.5 flex h-3.5 items-center gap-6 text-xs text-black">
        {menus.map(([text, className]) => (
          <button key={text} className={className}>{text}</button>
        ))}
      </nav>
      <h1 className="absolute top-0 left-[961px] text-base leading-[11px] text-[#ff6030]">博易云-永安期货</h1>
      <div className="flex h-[15px] items-start gap-1 pr-3 text-sm leading-[12px] text-[#d81010]">
        <button className="flex h-full w-[73px] items-center justify-center gap-2 rounded-b-sm border border-t-0 border-[#8c8c8c] bg-[#dcdcdc]">
          <svg className="h-3 w-2.5" viewBox="0 0 10 12"><path d="M6 0 1 7h3l-1 5 6-7H5l2-5z" fill="#f49a1c" /></svg>
          交易
        </button>
        <button className="flex h-full w-[73px] items-center justify-center gap-1 rounded-b-sm border border-t-0 border-[#8c8c8c] bg-[#dcdcdc]">
          <svg className="h-3 w-4" viewBox="0 0 16 12"><ellipse cx="8" cy="5" rx="8" ry="5" fill="#707070" /><path d="M4 8v4l4-3z" fill="#707070" /><path d="M4 4h2v2H4zM7 4h2v2H7zM10 4h2v2h-2z" fill="#e8e8e8" /></svg>
          论坛
        </button>
        <svg className="ml-2 h-2 w-[76px]" viewBox="0 0 76 8" fill="#fff" stroke="#808080"><rect x="4.500" y="2.500" width="12" height="3" /><path d="M30.500 0v4.500h12V0M33.500 0v1.500h6V0" /><path d="m61 6 5-5 5 5h-3l-2-2-2 2z" /></svg>
      </div>
    </header>
  );
}

function ChartHeader() {
  return (
    <div className="flex h-[19px] items-center border-b border-[#c0150a] pl-px text-xs text-[#ececec]">
      <h2 className="flex-1">螺纹2305(010605)&lt;周线&gt;</h2>
      <nav className="flex leading-[14px] text-[#78b8f8]">
        <a href="#overlay" className="mr-3 underline">商品叠加</a>
        <a href="#options" className="mr-5 underline">查看期权</a>
        <a href="#period" className="mr-5 underline">周期</a>
        <svg className="h-[15px] w-[51px]" viewBox="0 0 51 15" fill="none" stroke="#78b8f8">
          <rect x=".5" y=".5" width="15" height="14" /><rect x="17.500" y=".5" width="15" height="14" /><rect x="34.500" y=".5" width="15" height="14" />
          <path d="m2.500 7.500 4-4v2h7v4h-7v2zM30.500 7.500l-4-4v2h-7v4h7v2zM35 9.500h10M45.500 1v13M47 4.500h2M47 7.500h2M47 10.500h2" />
        </svg>
      </nav>
    </div>
  );
}

function OrderRow({ row, big }: { row: readonly [string, number, number]; big?: boolean }) {
  const [label, price, volume] = row;
  return (
    <div className={big ? 'flex h-[30px] items-center' : 'flex h-5 items-center'}>
      <span className="w-[42px] text-sm">{label}</span>
      <span className={`w-[65px] text-right font-bold text-[#ff3c3c] ${big ? 'text-[21px]' : 'text-sm'}`}>{price}</span>
      <span className={`pl-[15px] font-bold text-[#ffff00] ${big ? 'text-[21px]' : 'text-sm'}`}>{volume}</span>
    </div>
  );
}

function QuotePanel() {
  return (
    <aside className="flex w-[241px] shrink-0 flex-col border-l border-[#c0150a] text-[#ececec]">
      <div className="flex h-6 items-center pr-px">
        <h2 className="flex-1 text-center font-['Liberation_Serif','Noto_Sans_CJK_SC',serif] text-[21px] leading-6 text-[#ffff00]">螺纹2305(rb2305)</h2>
        <button aria-label="还原窗口">
          <svg className="h-[15px] w-4" viewBox="0 0 16 15" fill="none" stroke="#78b8f8"><rect x=".5" y=".5" width="15" height="14" /><path d="M6.500 5V2.500h7v6H10M6.500 3.500h7M2.500 6.500h7v6h-7zM2.500 7.500h7" /></svg>
        </button>
      </div>
      <div className="flex h-1.5 border-y border-[#c0150a] pl-px">
        <div className="w-[57%] bg-[#ff3c3c]" />
        <div className="flex-1 bg-[#00e000]" />
      </div>
      <div className="border-b border-[#c0150a] pl-[5px]">
        {asks.map((row) => <OrderRow key={row[0]} row={row} big={row[0] === '卖一'} />)}
      </div>
      <div className="border-b border-[#c0150a] pl-[5px]">
        {bids.map((row) => <OrderRow key={row[0]} row={row} big={row[0] === '买一'} />)}
      </div>
      <table className="w-full table-fixed border-b border-[#c0150a] text-sm">
        <tbody>
          {stats.map(([a, av, ac, b, bv, bc]) => (
            <tr key={a} className="h-5 leading-5">
              <th className="w-[42px] p-0 pl-[5px] text-left font-normal">{a}</th>
              <td className={`w-[70px] p-0 text-right font-bold ${ac}`}>{av}</td>
              <th className="w-[50px] p-0 pl-[15px] text-left font-normal whitespace-nowrap">{b}</th>
              <td className={`p-0 pr-1.5 text-right font-bold ${bc}`}>{bv}</td>
            </tr>
          ))}
        </tbody>
      </table>
      <table className="w-full table-fixed text-sm">
        <thead>
          <tr className="h-[22px] leading-[22px] text-[#808080]">
            <th className="w-[39px] p-0 pl-[5px] text-left font-normal">北京</th>
            <th className="w-[69px] p-0 text-right font-normal">价格</th>
            <th className="w-[48px] p-0 text-right font-normal whitespace-nowrap">√大单</th>
            <th className="w-[48px] p-0 text-right font-normal">仓差</th>
            <th className="p-0 pl-2 text-left font-normal">性质</th>
          </tr>
        </thead>
        <tbody>
          {ticks.map(([time, price, size, change, kind, color], i) => (
            <tr key={i} className="h-[22px] leading-[22px] font-bold">
              <td className={time.length > 3 ? 'p-0 pl-[5px]' : 'p-0 text-right text-xs font-normal'}>{time}</td>
              <td className="p-0 text-right text-[#ff3c3c]">{price}</td>
              <td className={`p-0 text-right ${color}`}>{size}</td>
              <td className="p-0 text-right text-[#ffff00]">{change}</td>
              <td className={`p-0 pl-2 font-normal ${color}`}>{kind}</td>
            </tr>
          ))}
        </tbody>
      </table>
      <div className="mt-auto flex h-4 border-t border-[#c0150a] text-xs leading-[14px]">
        <button className="-mt-px w-[37px] rounded-b-sm border-r border-b border-[#c0150a] bg-black">笔</button>
        <button className="w-9 border-r border-[#c0150a]">权</button>
      </div>
    </aside>
  );
}

function StatusBar() {
  return (
    <footer className="flex h-3.5 justify-between overflow-hidden bg-gradient-to-b from-[#c8c8c8] to-[#b0b0b0] pt-1.5 pr-1 pl-4 text-xs leading-[14px] font-bold text-[#505050]">
      <div className="flex font-['Liberation_Mono','Noto_Sans_CJK_SC',monospace] whitespace-nowrap">
        <span className="w-[77px] text-[#008800]">3310.65</span>
        <span className="w-[43px] text-[#008800]">-1.69</span>
        <span className="w-[70px]">3893.91亿</span>
        <span className="w-[10px] border-l border-[#888]" />
        <span className="w-[21px]">深</span>
        <span className="w-[77px] text-[#008800]">11849.51</span>
        <span className="w-[50px] text-[#008800]">-64.81</span>
        <span className="w-[70px]">5440.80亿</span>
        <span className="w-[10px] border-l border-[#888]" />
        <span className="w-[28px]">300</span>
        <span className="w-[77px] text-[#008800]">4117.74</span>
        <span className="w-[43px] text-[#008800]">-9.20</span>
        <span className="w-[70px]">2359.54亿</span>
        <span className="border-l border-[#888]" />
      </div>
      <div className="flex items-start">
        <span className="mr-2 text-[13px]">Pob<span className="text-[#e82020]">o</span></span>
        <svg className="mr-2.5 h-3 w-6" viewBox="0 0 24 12" fill="none" stroke="#505050" strokeWidth="2"><path d="M1 1h10L6 6zM6 6v6M14 12V7M18 12V4M22 12V1" /></svg>
        <span className="text-[13px] font-normal">16:11</span>
      </div>
    </footer>
  );
}

export default function App() {
  return (
    <div className={`relative overflow-hidden bg-[#16243f] pr-[3px] ${SONG}`}>
      <TitleBar />
      <Toolbar />
      <div className="absolute top-[3px] right-1 font-['Open_Sans','Noto_Sans_CJK_SC',sans-serif] text-xl leading-6 font-bold text-[#ff6400] [text-shadow:0_0_2px_#fff]">5E天资5etz.com</div>
      <main className="flex border-r-2 border-[#c8c8c8] bg-black">
        <div className={`relative min-w-0 flex-1 ${TAHOMA}`}>
          <div className={SONG}><ChartHeader /></div>
          <PriceChart />
          <VolumeChart />
          <MacdChart />
          <NdbChart />
          <RsiChart />
          <CciChart />
          <div className="h-[15px]">
            <svg className={`h-full w-full ${SONG}`} viewBox="0 1036 1594 15" preserveAspectRatio="xMinYMin slice" fill="#ececec">
              <text x="32" y="1048" fontSize="12">周线</text>
              {dates.map(([text, x]) => (
                <text key={x} x={x} y="1047" fontSize="11">{text}</text>
              ))}
              <line x1="60.5" x2="60.5" y1="1036" y2="1051" stroke={RED} />
            </svg>
          </div>
          <HoverInfo />
        </div>
        <QuotePanel />
      </main>
      <StatusBar />
    </div>
  );
}
